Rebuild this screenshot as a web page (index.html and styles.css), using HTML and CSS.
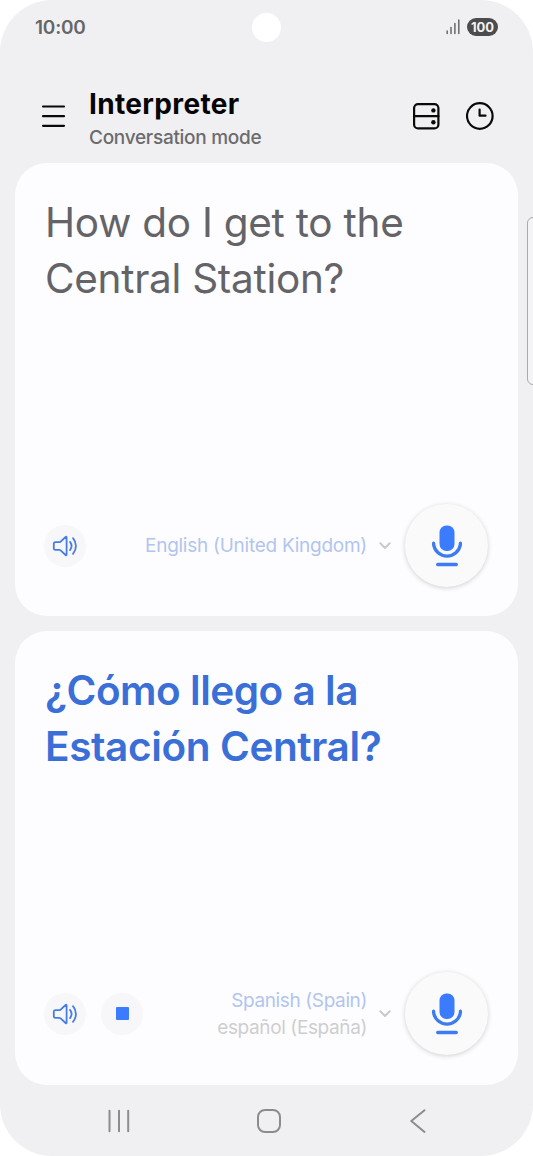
FILE: index.html
```html
<!DOCTYPE html>
<html lang="en">
<head>
<meta charset="utf-8">
<title>Interpreter</title>
<link rel="stylesheet" href="styles.css">
</head>
<body>
<svg class="symbols" aria-hidden="true">
  <symbol id="speaker" viewBox="0 0 26 22">
    <path d="M3.300 7.200h3.900c.5 0 1-.2 1.400-.6l5-4.600c.5-.5 1-.2 1 .4v17.200c0 .6-.5.900-1 .4l-5-4.600c-.4-.4-.9-.6-1.400-.6H3.300c-.9 0-1.500-.6-1.500-1.500V8.700c0-.9.600-1.500 1.500-1.500z"/>
    <path d="M18 6.900c1.900 2.500 1.900 5.700 0 8.200M21 3.200c3.900 4.600 3.900 11 0 15.600"/>
  </symbol>
  <symbol id="mic" viewBox="0 0 32 42">
    <rect x="8.500" y="0.500" width="15" height="25.500" rx="7" fill="#3b7cff"/>
    <path d="M2.600 18.200v1.300c1 6.700 6.500 11.600 13.400 11.600s12.400-4.900 13.400-11.600v-1.300" fill="none" stroke="#3d7bf2" stroke-width="3.300" stroke-linecap="round"/>
    <path d="M6.700 39.500h18.600" stroke="#3d7bf2" stroke-width="3.300" stroke-linecap="round"/>
  </symbol>
  <symbol id="chevron" viewBox="0 0 12 8">
    <path d="M1.300 1.300 6 6l4.700-4.700"/>
  </symbol>
</svg>
<div class="phone">
  <span class="camera"></span>
  <span class="edge-handle"></span>
  <div class="status">
    <span class="time">10:00</span>
    <div class="status-icons">
      <svg class="signal" width="15" height="16" viewBox="0 0 15 16">
        <path d="M1.200 12v2.500M5 8.500v6M8.900 4.500v10M12.800 1v13.500"/>
      </svg>
      <span class="battery">100</span>
    </div>
  </div>
  <header class="header">
    <svg class="line-icon" width="26" height="24" viewBox="0 0 26 24"><path d="M3 2.500h21M3 12.200h21M3 21.800h21"/></svg>
    <div class="titles">
      <h1 class="title">Interpreter</h1>
      <p class="subtitle">Conversation mode</p>
    </div>
    <div class="actions">
      <svg class="line-icon" width="28" height="28" viewBox="0 0 28 28">
        <rect x="2.100" y="2.100" width="24.300" height="24.300" rx="4"/>
        <path d="M2 14.200h24.400"/>
        <circle class="dot" cx="21.400" cy="8.400" r="2.200"/><circle class="dot" cx="21.400" cy="20.200" r="2.200"/>
      </svg>
      <svg class="line-icon" width="28" height="28" viewBox="0 0 28 28">
        <circle cx="13.800" cy="14" r="12.800"/>
        <path d="M13.600 7.500v6.200h5.900"/>
      </svg>
    </div>
  </header>
  <main class="panels">
    <section class="card">
      <div class="speech">
        <p class="line source-a">How do I get to the</p>
        <p class="line source-b">Central Station?</p>
      </div>
      <div class="controls">
        <span class="round"><svg class="speaker" width="26" height="22"><use href="#speaker"/></svg></span>
        <div class="languages"><span class="lang english">English (United Kingdom)</span></div>
        <svg class="chevron" width="12" height="8"><use href="#chevron"/></svg>
        <span class="mic"><svg width="32" height="42"><use href="#mic"/></svg></span>
      </div>
    </section>
    <section class="card card-translated">
      <div class="speech translated">
        <p class="line target-a">¿Cómo llego a la</p>
        <p class="line target-b">Estación Central?</p>
      </div>
      <div class="controls">
        <span class="round"><svg class="speaker" width="26" height="22"><use href="#speaker"/></svg></span>
        <span class="round"><span class="stop"></span></span>
        <div class="languages"><span class="lang spanish">Spanish (Spain)</span><span class="lang native">español (España)</span></div>
        <svg class="chevron" width="12" height="8"><use href="#chevron"/></svg>
        <span class="mic"><svg width="32" height="42"><use href="#mic"/></svg></span>
      </div>
    </section>
  </main>
  <nav class="navbar">
    <svg width="24" height="24" viewBox="0 0 24 24"><path d="M2.500 1.800v20.500M12 1.800v20.500M21.200 1.800v20.500"/></svg>
    <svg width="24" height="24" viewBox="0 0 24 24"><rect x="1" y="1" width="22" height="22" rx="7"/></svg>
    <svg width="24" height="24" viewBox="0 0 24 24"><path d="M18.500 1.300 5.300 12l13.200 10.900"/></svg>
  </nav>
</div>
</body>
</html>
```
FILE: styles.css
```css
* { box-sizing: border-box; }
body { margin: 0; background: #fff; font-family: Inter, "Liberation Sans", sans-serif; }
h1, p { margin: 0; }
svg { display: block; flex: none; }
.symbols { position: absolute; width: 0; height: 0; }
.phone {
  position: relative;
  width: 533px;
  height: 1156px;
  overflow: hidden;
  border-radius: 52px;
  background: #f0f0f2;
  display: flex;
  flex-direction: column;
}
.camera {
  position: absolute;
  top: 13px;
  left: 252px;
  width: 29px;
  height: 29px;
  border-radius: 50%;
  background: #fff;
}
.edge-handle {
  position: absolute;
  top: 217px;
  right: -8px;
  width: 14px;
  height: 168px;
  border: 1px solid #aaaaac;
  border-radius: 6px;
  background: #f4f4f6;
}
.status {
  height: 54px;
  padding: 0 35px;
  display: flex;
  justify-content: space-between;
  align-items: center;
}
.time { font-size: 19px; font-weight: 600; color: #666668; letter-spacing: -0.2px; }
.status-icons { display: flex; align-items: center; gap: 6px; }
.signal { fill: none; stroke: #68686a; stroke-width: 1.5; stroke-linecap: round; }
.battery {
  width: 31px;
  height: 18px;
  border-radius: 9px;
  background: #4c4c4e;
  color: #f4f4f4;
  font-size: 13px;
  font-weight: 700;
  line-height: 18px;
  text-align: center;
}
.header {
  height: 109px;
  padding: 15px 39px 0 40px;
  display: flex;
  align-items: center;
}
.line-icon { fill: none; stroke: #090909; stroke-width: 2.200; stroke-linecap: round; stroke-linejoin: round; }
.line-icon .dot { fill: #090909; stroke: none; }
.titles { margin-left: 23px; padding-top: 5px; }
.title { font-size: 28px; line-height: 34px; font-weight: 700; letter-spacing: 0.350px; color: #050507; }
.subtitle { margin-top: 5px; font-size: 19px; line-height: 24px; font-weight: 500; letter-spacing: -0.280px; color: #6b6b6e; }
.actions { margin-left: auto; display: flex; gap: 26px; }
.panels { height: 922px; padding: 0 15px; display: grid; grid-template-rows: 453px 454px; gap: 15px; }
.card {
  border-radius: 32px;
  background: #fdfdff;
  padding: 32px 30px 29px 30px;
  display: flex;
  flex-direction: column;
  justify-content: space-between;
}
.card-translated { padding-bottom: 30px; }
.speech { font-size: 40.500px; line-height: 55.500px; color: #646468; white-space: nowrap; }
.translated { font-weight: 600; color: #3a6fd8; }
.source-a { letter-spacing: -0.250px; }
.source-b { letter-spacing: -0.300px; }
.target-a { letter-spacing: -0.470px; }
.target-b { letter-spacing: -0.380px; }
.controls { margin-left: -1px; display: flex; align-items: center; }
.round {
  width: 42px;
  height: 42px;
  margin-right: 15px;
  border-radius: 50%;
  background: #f7f7f9;
  display: grid;
  place-items: center;
}
.speaker { fill: none; stroke: #477de3; stroke-width: 1.800; stroke-linecap: round; stroke-linejoin: round; }
.stop { width: 13px; height: 13px; border-radius: 1px; background: #3b7cff; }
.languages { margin-left: auto; display: flex; flex-direction: column; align-items: flex-end; }
.lang { font-size: 19px; line-height: 27px; color: #b2c5ee; white-space: nowrap; }
.english { letter-spacing: -0.260px; }
.spanish, .native { letter-spacing: -0.380px; }
.native { color: #cecece; }
.chevron { margin: 0 14px 0 12px; fill: none; stroke: #cacaca; stroke-width: 2; stroke-linecap: round; stroke-linejoin: round; }
.mic {
  width: 83px;
  height: 83px;
  border-radius: 50%;
  background: #fafafa;
  box-shadow: 0 1px 5px rgba(0, 0, 0, 0.180);
  display: grid;
  place-items: center;
}
.navbar {
  height: 71px;
  padding: 1px 103px 0 107px;
  display: flex;
  justify-content: space-between;
  align-items: center;
  fill: none;
  stroke: #8c8c8e;
  stroke-width: 2;
  stroke-linecap: round;
  stroke-linejoin: round;
}
```
